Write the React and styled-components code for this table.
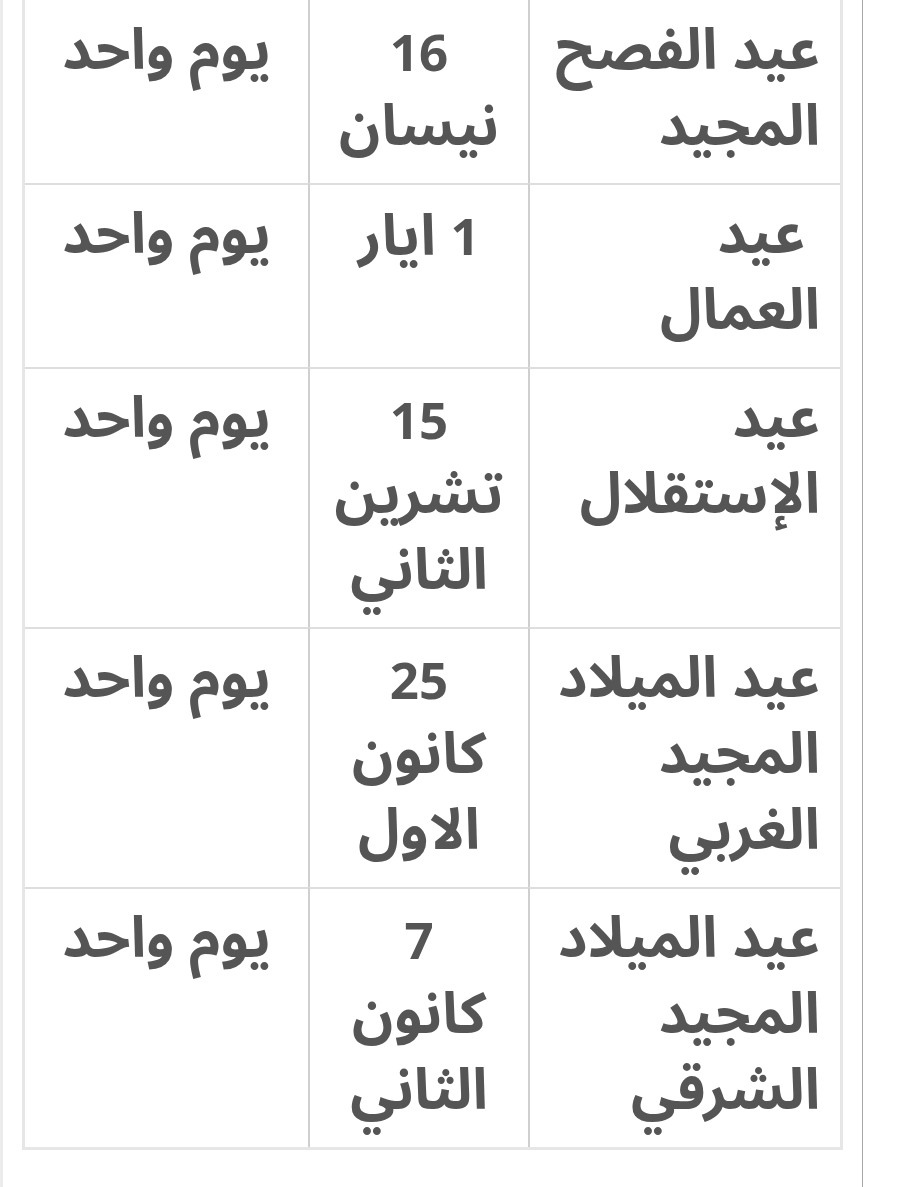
import React from "react";
import styled, { createGlobalStyle } from "styled-components";

const GlobalStyle = createGlobalStyle`
  html, body {
    margin: 0;
    padding: 0;
    background: #fff;
  }
  body {
    font-family: "Noto Sans Arabic", "Noto Sans", "DejaVu Sans", sans-serif;
  }
`;

// each cell is a list of lines, as the text wraps in the narrow phone view
const holidays = [
  { name: ["عيد الفصح", "المجيد"], day: "16", month: ["نيسان"] },
  { name: ["\u00a0عيد", "العمال"], day: "1", month: ["ايار"], inline: true },
  { name: ["عيد", "الإستقلال"], day: "15", month: ["تشرين", "الثاني"] },
  { name: ["عيد الميلاد", "المجيد", "الغربي"], day: "25", month: ["كانون", "الاول"] },
  { name: ["عيد الميلاد", "المجيد", "الشرقي"], day: "7", month: ["كانون", "الثاني"] },
];

function Lines({ items }) {
  return items.map((t, i) => <Line key={i}>{t}</Line>);
}

export default function App() {
  return (
    <>
      <GlobalStyle />
      <Page>
        <Strip />
        <Content>
          <Table>
            <colgroup>
              <col style={{ width: 312 }} />
              <col style={{ width: 220 }} />
              <col />
            </colgroup>
            <tbody>
              {holidays.map((h, i) => (
                <tr key={i}>
                  <Cell first={i === 0} align="start">
                    <Lines items={h.name} />
                  </Cell>
                  <Cell first={i === 0} align="center">
                    {h.inline ? (
                      <Line>
                        <Num>{h.day}</Num> {h.month[0]}
                      </Line>
                    ) : (
                      <>
                        <Line>
                          <Num>{h.day}</Num>
                        </Line>
                        <Lines items={h.month} />
                      </>
                    )}
                  </Cell>
                  <Cell first={i === 0} align="center" last>
                    <Line>يوم واحد</Line>
                  </Cell>
                </tr>
              ))}
            </tbody>
          </Table>
        </Content>
      </Page>
    </>
  );
}

const Page = styled.div`
  display: flex;
  min-height: 100vh;
  direction: ltr;
`;

const Strip = styled.div`
  width: 3px;
  background: #ececec;
  flex-shrink: 0;
`;

const Content = styled.div`
  width: 821px;
  padding: 0 19px;
  border-right: 1px solid #a8a8a8;
`;

const Table = styled.table`
  direction: rtl;
  width: 821px;
  margin-top: -3px;
  border: 3px solid #e6e6e6;
  border-collapse: separate;
  border-spacing: 0;
  table-layout: fixed;
`;

const Cell = styled.td`
  vertical-align: top;
  padding: ${(p) => (p.first ? "13px" : "12px")} 20px 18px;
  font-size: 57px;
  line-height: 76px;
  font-weight: 700;
  color: #555;
  text-align: ${(p) => p.align};
  border-top: ${(p) => (p.first ? "none" : "2px solid #dedede")};
  border-left: ${(p) => (p.last ? "none" : "2px solid #cfcfcf")};
`;

const Line = styled.div`
  height: 76px;
  white-space: nowrap;
`;

const Num = styled.span`
  font-family: "Noto Sans", "Open Sans", sans-serif;
  font-size: 51px;
  line-height: 76px;
`;
